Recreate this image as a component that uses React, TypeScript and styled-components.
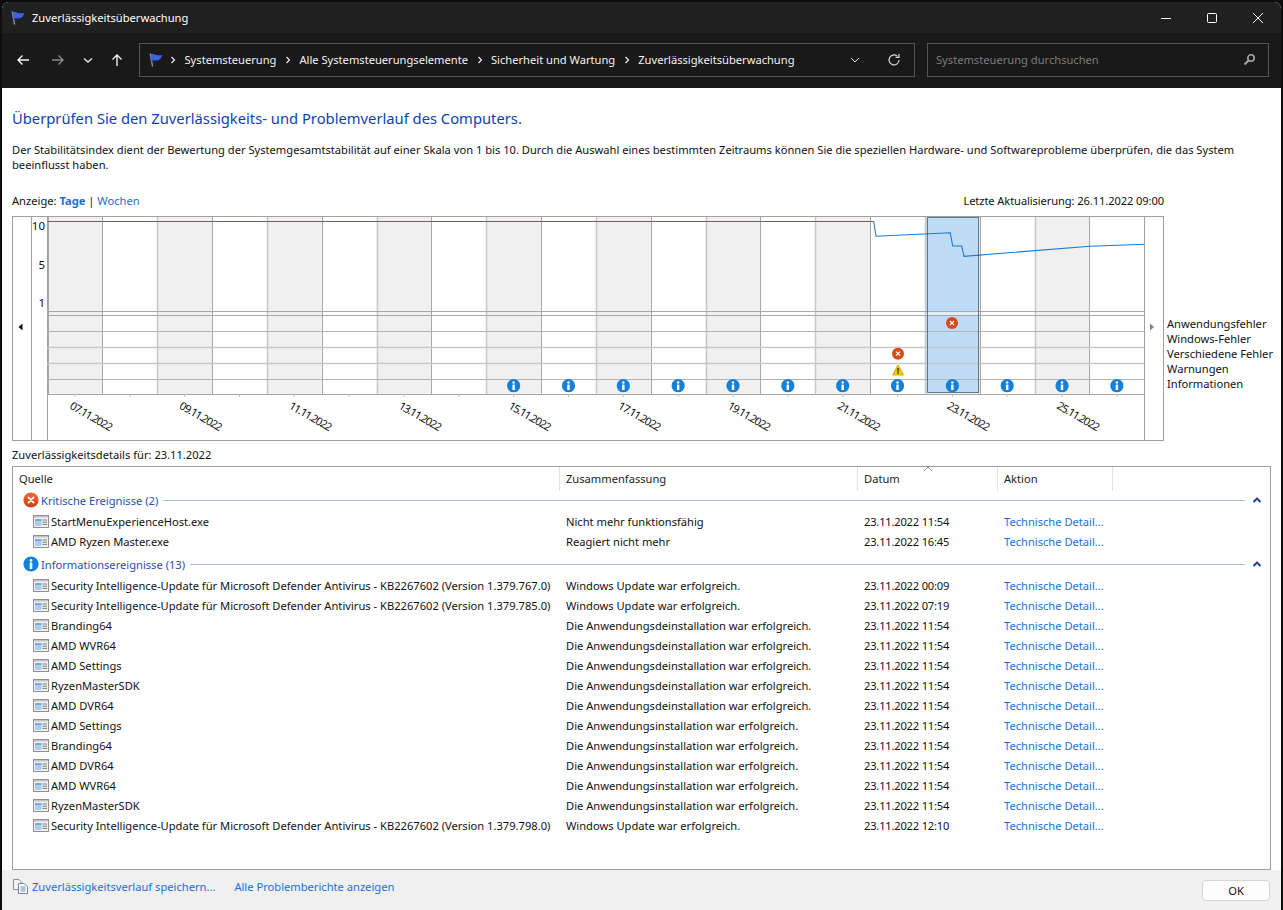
import React from 'react';
import styled, { createGlobalStyle } from 'styled-components';

const FONT = `"Noto Sans", "Open Sans", "Liberation Sans", sans-serif`;

const Global = createGlobalStyle`
  html, body { margin: 0; padding: 0; height: 100%; background: #0c0c0c; overflow: hidden; }
  #root { height: 100%; }
  * { box-sizing: border-box; }
`;

const Desktop = styled.div`
  width: 1283px;
  height: 910px;
  padding: 2px 2px 0 2px;
  background: #0d0d0d;
`;
const Window = styled.div`
  height: 908px;
  width: 1279px;
  border-radius: 7px 7px 0 0;
  overflow: hidden;
  display: flex;
  flex-direction: column;
  background: #fff;
  font-family: ${FONT};
  font-size: 11.15px;
  color: #111;
`;
const TitleBar = styled.div`
  height: 31px;
  flex: none;
  background: #202020;
  color: #fff;
  display: flex;
  align-items: center;
  padding-left: 8px;
  gap: 6px;
`;
const TitleText = styled.span`
  flex: 1;
`;
const WinButtons = styled.div`
  display: flex;
  align-items: center;
  color: #fff;
`;
const WinBtn = styled.div`
  width: 46px;
  height: 31px;
  display: flex;
  align-items: center;
  justify-content: center;
`;
const NavBar = styled.div`
  height: 55px;
  flex: none;
  background: #191919;
  display: flex;
  align-items: center;
  padding: 0 12px 2px 4px;
`;
const NavBtn = styled.div<{ $w: number }>`
  width: ${p => p.$w}px;
  height: 30px;
  flex: none;
  display: flex;
  align-items: center;
  justify-content: center;
`;
const Address = styled.div`
  margin-left: 5px;
  width: 776px;
  height: 34px;
  flex: none;
  border: 1px solid #555;
  display: flex;
  align-items: center;
  padding-left: 8px;
  color: #f2f2f2;
`;
const Crumbs = styled.div`
  flex: 1;
  display: flex;
  align-items: center;
  gap: 7.5px;
  margin-left: 5px;
`;
const AddressTail = styled.div`
  display: flex;
  align-items: center;
  gap: 27px;
  padding-right: 13px;
`;
const Search = styled.div`
  margin-left: 12px;
  flex: 1;
  height: 34px;
  border: 1px solid #555;
  display: flex;
  align-items: center;
  justify-content: space-between;
  padding: 0 12px 0 8px;
  color: #7b7b7b;
`;
const Content = styled.div`
  flex: 1;
  min-height: 0;
  display: flex;
  flex-direction: column;
  padding: 20px 10px 0 10px;
  background: #fff;
`;
const Heading = styled.h1`
  margin: 0;
  font-size: 14.75px;
  font-weight: 400;
  line-height: 20px;
  color: #0f3fb4;
`;
const Intro = styled.p`
  margin: 14px 0 0;
  line-height: 15px;
  width: 1240px;
  color: #111;
`;
const ViewRow = styled.div`
  margin-top: 20px;
  width: 1152px;
  height: 16px;
  display: flex;
  justify-content: space-between;
  align-items: center;
`;
const UpdatedText = styled.span`
  letter-spacing: -0.1px;
`;
const LinkText = styled.span<{ $bold?: boolean }>`
  color: #1b6fd6;
  font-weight: ${p => (p.$bold ? 700 : 400)};
`;
const ChartRow = styled.div`
  margin-top: 8px;
  display: flex;
  align-items: flex-start;
`;
const ChartBox = styled.div`
  width: 1152px;
  height: 225px;
  flex: none;
`;
const Legend = styled.div`
  margin: 100px 0 0 3px;
  display: flex;
  flex-direction: column;
  line-height: 15px;
  white-space: nowrap;
`;
const DetailsLabel = styled.div`
  margin-top: 5px;
  height: 18px;
  line-height: 18px;
`;
const ListBox = styled.div`
  flex: 1;
  margin-top: 2px;
  width: 1259px;
  border: 1px solid #a0a0a0;
  min-height: 0;
  display: flex;
  flex-direction: column;
`;
const Header = styled.div`
  height: 23px;
  flex: none;
  display: grid;
  grid-template-columns: 547px 298px 140px 115px;
  position: relative;
`;
const HeadCell = styled.div`
  padding-left: 6px;
  line-height: 24px;
  border-right: 1px solid #e3e3e3;
  color: #222;
`;
const SortMark = styled.svg`
  position: absolute;
  left: 910px;
  top: -1px;
`;
const Group = styled.div<{ $gap: number }>`
  height: 20px;
  flex: none;
  margin-top: ${p => p.$gap}px;
  display: flex;
  align-items: center;
  padding-left: 10px;
  color: #2c4cb0;
`;
const GroupLabel = styled.span`
  margin-left: 2px;
  white-space: nowrap;
`;
const GroupRule = styled.span`
  flex: 1;
  height: 1px;
  background: #a9bde8;
  margin: 0 7px 0 5px;
`;
const GroupChevron = styled.svg`
  margin-right: 8px;
  flex: none;
`;
const Row = styled.div`
  height: 20px;
  display: grid;
  grid-template-columns: 553px 298px 140px 1fr;
  align-items: center;
`;
const SourceCell = styled.div`
  display: flex;
  align-items: center;
  padding-left: 20px;
  gap: 2px;
  white-space: nowrap;
`;
const Cell = styled.div<{ $tight?: boolean }>`
  white-space: nowrap;
  letter-spacing: ${p => (p.$tight ? '-0.2px' : 'normal')};
`;
const Rows = styled.div`
  margin-top: 1px;
`;
const Footer = styled.div`
  height: 40px;
  flex: none;
  background: #f0f0f0;
  display: flex;
  align-items: center;
  padding: 0 10px 8px 10px;
`;
const FooterLink = styled.span`
  color: #1b6fd6;
  white-space: nowrap;
`;
const FooterLinks = styled.div`
  flex: 1;
  display: flex;
  align-items: center;
  gap: 19px;
`;
const FooterSave = styled.div`
  display: flex;
  align-items: center;
  gap: 3px;
`;
const OkButton = styled.button`
  width: 68px;
  height: 21px;
  margin-right: 1px;
  margin-top: 9px;
  background: #fdfdfd;
  border: 1px solid #d3d3d3;
  border-radius: 4px;
  font: inherit;
  color: #111;
  padding: 0;
`;

const Flag = ({ size = 16 }: { size?: number }) => (
  <svg width={size} height={size} viewBox="0 0 16 16">
    <path d="M2.2 1.5 L4.6 14.5" stroke="#8a8c94" strokeWidth="1.4" fill="none" />
    <path d="M2.6 2.2 C5 0.8 6.2 2.6 8.2 3 C10 3.3 11.4 3.6 14.5 3 C13.6 4.5 13 5.6 12.8 6.6 C11 8.6 8.6 8.2 7 8 C5.6 7.8 4.4 8.2 3.6 9 Z" fill="#3f62de" />
    <path d="M3.6 9 C4.4 8.2 5.6 7.8 7 8 C8.6 8.2 11 8.6 12.8 6.6 C11.6 9.4 8.4 9.6 6.8 9.3 C5.4 9.1 4.4 9.4 3.8 10 Z" fill="#21379f" />
  </svg>
);

const Chevron = () => (
  <svg width="8" height="8" viewBox="0 0 8 8">
    <path d="M2.5 1 L5.5 4 L2.5 7" fill="none" stroke="#eaeaea" strokeWidth="1.2" />
  </svg>
);

const ArrowIcon = ({ d, color }: { d: string; color: string }) => (
  <svg width="16" height="16" viewBox="0 0 16 16">
    <path d={d} fill="none" stroke={color} strokeWidth="1.4" />
  </svg>
);

const ErrorIcon = ({ size = 16 }: { size?: number }) => (
  <svg width={size} height={size} viewBox="0 0 16 16">
    <defs>
      <linearGradient id="errG" x1="0" y1="0" x2="0" y2="1">
        <stop offset="0" stopColor="#ec6a3a" />
        <stop offset="1" stopColor="#cf3f12" />
      </linearGradient>
    </defs>
    <circle cx="8" cy="8" r="7.6" fill="url(#errG)" />
    <path d="M5.4 5.4 L10.6 10.6 M10.6 5.4 L5.4 10.6" stroke="#fff" strokeWidth="1.7" strokeLinecap="round" />
  </svg>
);

const InfoIcon = ({ size = 16 }: { size?: number }) => (
  <svg width={size} height={size} viewBox="0 0 16 16">
    <circle cx="8" cy="8" r="7.6" fill="#1480d8" />
    <circle cx="8" cy="4.4" r="1.35" fill="#fff" />
    <rect x="6.7" y="6.6" width="2.6" height="6.4" rx="0.5" fill="#fff" />
  </svg>
);

const RowIcon = () => (
  <svg width="16" height="16" viewBox="0 0 16 16">
    <rect x="0.5" y="2.5" width="15" height="12" fill="#f2f2f2" stroke="#8f8f8f" />
    <rect x="1" y="3" width="14" height="1.6" fill="#c4c4c4" />
    <rect x="2" y="6" width="6.5" height="7" fill="#a9cbf0" />
    <rect x="2" y="6" width="6.5" height="2" fill="#7ba9dd" />
    <rect x="9.5" y="6.5" width="4.5" height="1" fill="#7a7a7a" />
    <rect x="9.5" y="8.7" width="4.5" height="1" fill="#7a7a7a" />
    <rect x="9.5" y="10.9" width="4.5" height="1" fill="#7a7a7a" />
  </svg>
);

const GroupUp = () => (
  <GroupChevron width="10" height="8" viewBox="0 0 10 8">
    <path d="M1.5 6 L5 2.5 L8.5 6" fill="none" stroke="#12388f" strokeWidth="1.8" />
  </GroupChevron>
);

const ReportIcon = () => (
  <svg width="17" height="17" viewBox="0 0 17 17">
    <path d="M1.5 1.5 H7 L9 3.5 V11.5 H1.5 Z" fill="#f4f4f4" stroke="#8d8d8d" />
    <path d="M6.5 5.5 H12 L15.5 8.5 V15.5 H6.5 Z" fill="#fff" stroke="#6f86a8" />
    <path d="M8.5 9 H13.5 M8.5 11 H13.5 M8.5 13 H13.5" stroke="#6f86a8" />
  </svg>
);

const COL = 54.84;
const X0 = 35.5; // plot left, in chart-box coordinates (box starts at x = 12)
const dates = ['07', '09', '11', '13', '15', '17', '19', '21', '23', '25'];

const Chart = () => {
  const colX = (i: number) => X0 + i * COL;
  const linePts: [number, number][] = [
    [35.5, 5.5], [861.7, 5.5], [864, 20.3], [938.3, 16.7], [940.7, 30], [949.7, 30], [952, 40.3], [1078, 30.3], [1132.3, 28.3],
  ];
  const rowLines = [115.3, 130.7, 146.7, 162.7];
  const rowThick = [false, true, true, false];
  return (
    <svg width="1152" height="225" viewBox="0 0 1152 225" style={{ display: 'block' }}>
      <rect x="0.5" y="0.5" width="1151" height="224" fill="#fff" stroke="#a0a0a0" />
      {Array.from({ length: 20 }).map((_, i) =>
        i % 2 === 0 ? (
          <rect key={i} x={colX(i)} y="1" width={COL} height="177" fill="#f0f0f0" />
        ) : null,
      )}
      <rect x={colX(16) + 0.5} y="1" width={COL - 1} height="176" fill="#bedcf5" />
      <rect x={colX(16) + 1} y="95.5" width={COL - 2} height="4" fill="#dfeefb" />
      {Array.from({ length: 21 }).map((_, i) => (
        <line key={i} x1={Math.round(colX(i)) + 0.5} x2={Math.round(colX(i)) + 0.5} y1="1" y2="178" stroke={i % 2 === 0 && i < 20 && i > 0 ? '#c8c8c8' : '#a8a8a8'} strokeWidth={i % 2 === 0 && i > 0 && i < 20 ? 1.5 : 1} />
      ))}
      <line x1="19.5" x2="19.5" y1="0" y2="225" stroke="#a0a0a0" />
      <line x1="35.5" x2="35.5" y1="0" y2="225" stroke="#a0a0a0" />
      <line x1="1132.5" x2="1132.5" y1="0" y2="225" stroke="#a0a0a0" />
      <line x1="35" x2="1132" y1="95.5" y2="95.5" stroke="#a8a8a8" />
      <line x1="35" x2="1132" y1="99.5" y2="99.5" stroke="#a8a8a8" />
      {rowLines.map((y, i) => (
        <line key={y} x1="35" x2="1132" y1={Math.round(y) + 0.5} y2={Math.round(y) + 0.5} stroke={rowThick[i] ? '#c8c8c8' : '#b4b4b4'} strokeWidth={rowThick[i] ? 1.5 : 1} />
      ))}
      <line x1="35" x2="1132" y1="178.5" y2="178.5" stroke="#a8a8a8" />
      {Array.from({ length: 20 }).map((_, i) => (
        <line key={i} x1={colX(i) + COL / 2} x2={colX(i) + COL / 2} y1="178" y2="181" stroke="#c0c0c0" />
      ))}
      <polyline points={linePts.map(p => p.join(',')).join(' ')} fill="none" stroke="#1b7ad0" strokeWidth="1.1" />
      <rect x="915.5" y="1.5" width="51" height="175" fill="none" stroke="#111" strokeDasharray="1 1" />
      <g fontFamily={FONT} fontSize="11.5" fill="#111" textAnchor="end">
        <text x="33" y="13.5">10</text>
        <text x="33" y="53">5</text>
        <text x="33" y="91">1</text>
      </g>
      <path d="M6.5 111 L10.5 107.5 V114.5 Z" fill="#111" />
      <path d="M1138 107.5 L1142 111 L1138 114.5 Z" fill="#808080" />
      {dates.map((d, i) => {
        const cx = colX(i * 2) + COL / 2;
        return (
          <text key={d} transform={`translate(${cx - 6} 192) rotate(30)`} fontFamily={FONT} fontSize="11" letterSpacing="-1" fill="#111">
            {d}.11.2022
          </text>
        );
      })}
      {Array.from({ length: 12 }).map((_, i) => (
        <svg key={i} x={colX(i + 8) + COL / 2 - 7} y="162.7" width="14" height="14" viewBox="0 0 16 16">
          <circle cx="8" cy="8" r="7.6" fill="#1480d8" />
          <circle cx="8" cy="4.4" r="1.4" fill="#fff" />
          <rect x="6.6" y="6.6" width="2.8" height="6.4" rx="0.5" fill="#fff" />
        </svg>
      ))}
      <g>
        <circle cx="940" cy="107" r="6" fill="#d9491a" />
        <path d="M938 105 L942 109 M942 105 L938 109" stroke="#fff" strokeWidth="1.2" />
        <circle cx="886" cy="137.7" r="6" fill="#d9491a" />
        <path d="M884 135.7 L888 139.7 M888 135.7 L884 139.7" stroke="#fff" strokeWidth="1.2" />
        <path d="M886 149 L891.5 159 H880.5 Z" fill="#f5c400" stroke="#e0a800" strokeLinejoin="round" />
        <rect x="885.3" y="152" width="1.4" height="3.8" fill="#333" />
        <rect x="885.3" y="156.4" width="1.4" height="1.4" fill="#333" />
      </g>
    </svg>
  );
};

const critical = [
  ['StartMenuExperienceHost.exe', 'Nicht mehr funktionsfähig', '23.11.2022 11:54'],
  ['AMD Ryzen Master.exe', 'Reagiert nicht mehr', '23.11.2022 16:45'],
];
const sec = (v: string) => `Security Intelligence-Update für Microsoft Defender Antivirus - KB2267602 (Version 1.379.${v}.0)`;
const wu = 'Windows Update war erfolgreich.';
const un = 'Die Anwendungsdeinstallation war erfolgreich.';
const ins = 'Die Anwendungsinstallation war erfolgreich.';
const t = '23.11.2022 11:54';
const info = [
  [sec('767'), wu, '23.11.2022 00:09'],
  [sec('785'), wu, '23.11.2022 07:19'],
  ['Branding64', un, t],
  ['AMD WVR64', un, t],
  ['AMD Settings', un, t],
  ['RyzenMasterSDK', un, t],
  ['AMD DVR64', un, t],
  ['AMD Settings', ins, t],
  ['Branding64', ins, t],
  ['AMD DVR64', ins, t],
  ['AMD WVR64', ins, t],
  ['RyzenMasterSDK', ins, t],
  [sec('798'), wu, '23.11.2022 12:10'],
];

const EventRows = ({ items }: { items: string[][] }) => (
  <Rows>
    {items.map((r, i) => (
      <Row key={i}>
        <SourceCell><RowIcon /><span>{r[0]}</span></SourceCell>
        <Cell>{r[1]}</Cell>
        <Cell $tight>{r[2]}</Cell>
        <Cell><LinkText>Technische Detail...</LinkText></Cell>
      </Row>
    ))}
  </Rows>
);

export default function App() {
  return (
    <Desktop>
      <Global />
      <Window>
        <TitleBar>
          <Flag />
          <TitleText>Zuverlässigkeitsüberwachung</TitleText>
          <WinButtons>
            <WinBtn>
              <svg width="12" height="12" viewBox="0 0 12 12"><path d="M1 6.5 H11" stroke="#fff" /></svg>
            </WinBtn>
            <WinBtn>
              <svg width="12" height="12" viewBox="0 0 12 12"><rect x="1.5" y="1.5" width="9" height="9" rx="1" fill="none" stroke="#fff" /></svg>
            </WinBtn>
            <WinBtn>
              <svg width="12" height="12" viewBox="0 0 12 12"><path d="M1 1 L11 11 M11 1 L1 11" stroke="#fff" /></svg>
            </WinBtn>
          </WinButtons>
        </TitleBar>
        <NavBar>
          <NavBtn $w={34}><ArrowIcon d="M14 8 H3 M7.5 3.5 L3 8 L7.5 12.5" color="#f5f5f5" /></NavBtn>
          <NavBtn $w={36}><ArrowIcon d="M2 8 H13 M8.5 3.5 L13 8 L8.5 12.5" color="#8a8a8a" /></NavBtn>
          <NavBtn $w={24}><ArrowIcon d="M4 6.5 L8 10 L12 6.5" color="#e5e5e5" /></NavBtn>
          <NavBtn $w={34}><ArrowIcon d="M8 14 V3 M3.5 7.5 L8 3 L12.5 7.5" color="#f0f0f0" /></NavBtn>
          <Address>
            <Flag />
            <Crumbs>
              <Chevron /><span>Systemsteuerung</span>
              <Chevron /><span>Alle Systemsteuerungselemente</span>
              <Chevron /><span>Sicherheit und Wartung</span>
              <Chevron /><span>Zuverlässigkeitsüberwachung</span>
            </Crumbs>
            <AddressTail>
              <svg width="10" height="10" viewBox="0 0 10 10"><path d="M1 3 L5 7 L9 3" fill="none" stroke="#ddd" /></svg>
              <svg width="14" height="14" viewBox="0 0 14 14">
                <path d="M12 7 A5 5 0 1 1 10.2 3.1" fill="none" stroke="#d8d8d8" strokeWidth="1.2" />
                <path d="M12 1 V4.4 H8.6" fill="none" stroke="#d8d8d8" strokeWidth="1.2" />
              </svg>
            </AddressTail>
          </Address>
          <Search>
            <span>Systemsteuerung durchsuchen</span>
            <svg width="13" height="13" viewBox="0 0 13 13">
              <circle cx="8" cy="5" r="3.2" fill="none" stroke="#a5a5a5" strokeWidth="1.6" />
              <path d="M5.5 7.5 L1.5 11.5" stroke="#a5a5a5" strokeWidth="2" />
            </svg>
          </Search>
        </NavBar>
        <Content>
          <Heading>Überprüfen Sie den Zuverlässigkeits- und Problemverlauf des Computers.</Heading>
          <Intro>
            Der Stabilitätsindex dient der Bewertung der Systemgesamtstabilität auf einer Skala von 1 bis 10. Durch die Auswahl eines bestimmten Zeitraums können Sie die speziellen Hardware- und Softwareprobleme überprüfen, die das System beeinflusst haben.
          </Intro>
          <ViewRow>
            <span>Anzeige: <LinkText $bold>Tage</LinkText> | <LinkText>Wochen</LinkText></span>
            <UpdatedText>Letzte Aktualisierung: 26.11.2022 09:00</UpdatedText>
          </ViewRow>
          <ChartRow>
            <ChartBox><Chart /></ChartBox>
            <Legend>
              <span>Anwendungsfehler</span>
              <span>Windows-Fehler</span>
              <span>Verschiedene Fehler</span>
              <span>Warnungen</span>
              <span>Informationen</span>
            </Legend>
          </ChartRow>
          <DetailsLabel>Zuverlässigkeitsdetails für: 23.11.2022</DetailsLabel>
          <ListBox>
            <Header>
              <HeadCell>Quelle</HeadCell>
              <HeadCell>Zusammenfassung</HeadCell>
              <HeadCell>Datum</HeadCell>
              <HeadCell>Aktion</HeadCell>
              <SortMark width="10" height="6" viewBox="0 0 10 6">
                <path d="M1 5 L5 1 L9 5" fill="none" stroke="#9a9a9a" />
              </SortMark>
            </Header>
            <Group $gap={0}>
              <ErrorIcon />
              <GroupLabel>Kritische Ereignisse (2)</GroupLabel>
              <GroupRule />
              <GroupUp />
            </Group>
            <EventRows items={critical} />
            <Group $gap={3}>
              <InfoIcon />
              <GroupLabel>Informationsereignisse (13)</GroupLabel>
              <GroupRule />
              <GroupUp />
            </Group>
            <EventRows items={info} />
          </ListBox>
        </Content>
        <Footer>
          <FooterLinks>
            <FooterSave><ReportIcon /><FooterLink>Zuverlässigkeitsverlauf speichern...</FooterLink></FooterSave>
            <FooterLink>Alle Problemberichte anzeigen</FooterLink>
          </FooterLinks>
          <OkButton>OK</OkButton>
        </Footer>
      </Window>
    </Desktop>
  );
}
